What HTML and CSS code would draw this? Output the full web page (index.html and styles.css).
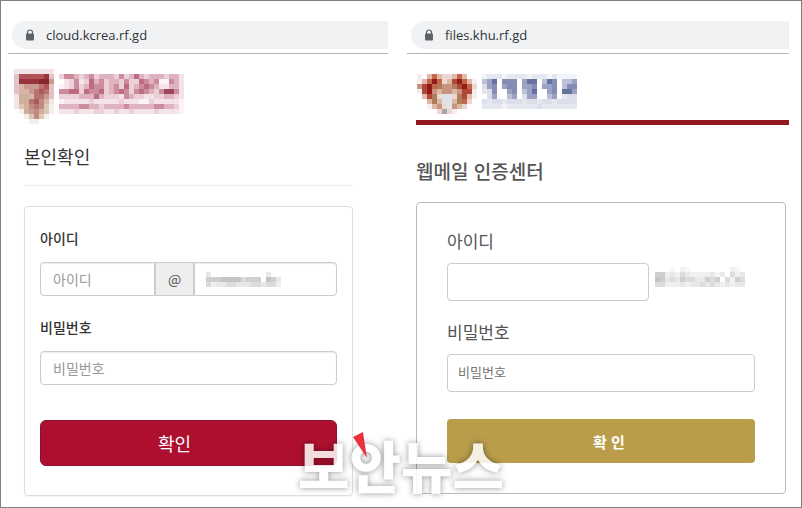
FILE: index.html
```html
<!DOCTYPE html>
<html lang="ko">
<head>
    <meta charset="UTF-8">
    <meta name="viewport" content="width=device-width, initial-scale=1.0">
    <title>보안뉴스</title>
    <link rel="stylesheet" href="styles.css">
</head>
<body>
    <main class="frame">
        <section class="panel cloud">
            <div class="address-bar">
                <div class="address">
                    <svg class="lock" viewBox="0 0 10 12" width="10" height="12">
                        <path d="M2.500 5V3.500a2.500 2.500 0 0 1 5 0V5" fill="none" stroke="#5f6368" stroke-width="1.200"/>
                        <rect x="1" y="4.500" width="8" height="7" rx="1" fill="#5f6368"/>
                    </svg>
                    <span>cloud.kcrea.rf.gd</span>
                </div>
            </div>
            <div class="logo"><svg class="mosaic" data-map="cloudLogo"></svg></div>
            <div class="content">
                <h1>본인확인</h1>
                <form class="box">
                    <label for="cloud-id">아이디</label>
                    <div class="input-group">
                        <input type="text" id="cloud-id" class="user" placeholder="아이디">
                        <span class="addon">@</span>
                        <div class="domain">
                            <input type="text" aria-label="도메인">
                            <svg class="mosaic" data-map="cloudDomain"></svg>
                        </div>
                    </div>
                    <label for="cloud-pw">비밀번호</label>
                    <input type="password" id="cloud-pw" placeholder="비밀번호">
                    <button type="button">확인</button>
                </form>
            </div>
        </section>

        <section class="panel files">
            <div class="address-bar">
                <div class="address">
                    <svg class="lock" viewBox="0 0 10 12" width="10" height="12">
                        <path d="M2.500 5V3.500a2.500 2.500 0 0 1 5 0V5" fill="none" stroke="#5f6368" stroke-width="1.200"/>
                        <rect x="1" y="4.500" width="8" height="7" rx="1" fill="#5f6368"/>
                    </svg>
                    <span>files.khu.rf.gd</span>
                </div>
            </div>
            <div class="logo"><svg class="mosaic" data-map="filesLogo"></svg></div>
            <div class="content">
                <h1>웹메일 인증센터</h1>
                <form class="box">
                    <label for="files-id">아이디</label>
                    <div class="id-row">
                        <input type="text" id="files-id">
                        <svg class="mosaic" data-map="filesDomain"></svg>
                    </div>
                    <label for="files-pw">비밀번호</label>
                    <input type="password" id="files-pw" placeholder="비밀번호">
                    <button type="button">확 인</button>
                </form>
            </div>
        </section>

        <div class="watermark">
            <span class="name">보안뉴스</span>
            <svg class="needle" viewBox="0 0 16 26" width="16" height="26">
                <path d="M1 5L11 0L15 26Z" fill="#e8323c"/>
            </svg>
        </div>
    </main>
    <script src="script.js"></script>
</body>
</html>
```

FILE: styles.css
```css
* {
    box-sizing: border-box;
}
body {
    margin: 0;
    background-color: #fff;
    color: #333;
    font-family: "Noto Sans CJK KR", sans-serif;
    font-size: 14px;
    line-height: 20px;
}
.frame {
    position: relative;
    display: grid;
    grid-template-columns: 380fr 382fr;
    gap: 19px;
    min-height: 100vh;
    padding: 20px 12px 11px 7px;
    border: 1px solid #808080;
}
.address-bar {
    padding: 0 0 4px 4px;
    border-bottom: 1px solid #b4b4b4;
}
.address {
    display: flex;
    align-items: center;
    gap: 11px;
    height: 28px;
    padding-left: 13px;
    border-radius: 14px 0 0 14px;
    background-color: #f0f2f4;
    color: #303438;
    font-family: "Open Sans", sans-serif;
    font-size: 13px;
}
.mosaic {
    display: block;
    flex: none;
}
h1 {
    margin: 0;
    font-weight: 400;
}
label {
    display: block;
}
input {
    display: block;
    width: 100%;
    min-width: 0;
    border: 1px solid #ccc;
    border-radius: 4px;
    background-color: #fff;
    font-family: inherit;
    color: #555;
}
button {
    display: block;
    width: 100%;
    color: #fff;
    font-family: inherit;
}

/* left page */
.cloud .logo {
    padding: 15px 0 0 6px;
}
.cloud .content {
    padding: 20px 35px 0 16px;
}
.cloud h1 {
    padding-bottom: 17px;
    border-bottom: 1px solid #eee;
    font-size: 18px;
    line-height: 24px;
}
.cloud .box {
    margin-top: 20px;
    padding: 21px 15px 29px;
    border: 1px solid #ddd;
    border-radius: 4px;
    box-shadow: 0 1px 1px rgba(0, 0, 0, 0.05);
}
.cloud label {
    margin-bottom: 14px;
    font-weight: 500;
}
.cloud input {
    height: 34px;
    padding: 0 12px;
    font-size: 14px;
    box-shadow: inset 0 1px 1px rgba(0, 0, 0, 0.08);
}
.cloud input::placeholder {
    color: #999;
}
.input-group {
    display: grid;
    grid-template-columns: 115fr 39px 143fr;
    margin-bottom: 21px;
}
.input-group .user {
    border-radius: 4px 0 0 4px;
}
.addon {
    border: 1px solid #ccc;
    background-color: #eee;
    color: #555;
    line-height: 32px;
    text-align: center;
}
.domain {
    position: relative;
}
.domain input {
    border-radius: 0 4px 4px 0;
}
.domain .mosaic {
    position: absolute;
    top: 10px;
    left: 12px;
}
.cloud button {
    height: 46px;
    margin-top: 35px;
    padding: 0 28px 0 0;
    border: 1px solid #8a1030;
    border-radius: 6px;
    background-color: #ae0f2f;
    font-size: 18px;
}

/* right page */
.files {
    color: #555;
}
.files .logo {
    margin-left: 9px;
    padding: 20px 0 6px 1px;
    border-bottom: 5px solid #921820;
}
.files .content {
    padding: 33px 3px 0 9px;
}
.files h1 {
    font-size: 19px;
    font-weight: 500;
    line-height: 26px;
}
.files .box {
    margin-top: 18px;
    padding: 28px 30px 30px;
    border: 1px solid #bbb;
    border-radius: 4px;
}
.files label {
    margin-bottom: 12px;
    font-size: 17px;
}
.files input {
    height: 38px;
    padding: 0 10px 4px;
    font-size: 13px;
}
.files input::placeholder {
    color: #757575;
}
.id-row {
    display: flex;
    align-items: center;
    gap: 6px;
    margin-bottom: 21px;
}
.id-row .mosaic {
    margin: 0 10px 10px 0;
}
.files button {
    height: 44px;
    margin-top: 27px;
    padding: 0 0 0 16px;
    border: 0;
    border-radius: 4px;
    background-color: #b99d4b;
    font-size: 15px;
    font-weight: 700;
}

.watermark {
    position: absolute;
    bottom: 3px;
    left: 50%;
    transform: translateX(-50%);
    color: #fff;
    font-size: 56px;
    font-weight: 900;
    line-height: 80px;
    white-space: nowrap;
    pointer-events: none;
}
.watermark .name {
    display: block;
    filter: drop-shadow(0 0 3px rgba(0, 0, 0, 0.5)) opacity(0.85);
}
.needle {
    position: absolute;
    top: 8px;
    left: 54px;
}
```

FILE: script.js
```javascript
const CELL = 5;

// number keys run from light to dark, letter keys are single colours
const palettes = {
    pink: ['#fff', '#fbf3f5', '#f4e3e8', '#ecd0d8', '#dfb2bf', '#cc8c9e', '#bc6c82', '#a04458'],
    shield: {
        a: '#f5e4e6', b: '#e2c2c4', c: '#b05358', d: '#98343a', e: '#87262c',
        f: '#d8b5a8', g: '#ca9a92', h: '#b87272', i: '#a85a5a', j: '#cfb09a',
        k: '#dcc8b8', l: '#f6eeea', m: '#c08c80'
    },
    emblem: {
        a: '#f8eeee', b: '#e4b8a8', c: '#c4664c', d: '#b04838', e: '#951c16',
        f: '#c89480', g: '#dcb8a4', h: '#e6dcd6', i: '#e0e2e8', j: '#b07c60',
        k: '#ecd6d2', l: '#a8a4a4'
    },
    blue: ['#fff', '#f3f4f9', '#e6e8f1', '#dcdfea', '#bcc1d8', '#9aa1c2', '#858db4', '#66719f'],
    grey: ['#fff', '#f7f7f8', '#f0f0f1', '#e8e8e9', '#dcdcdd', '#cfcfd0', '#c4c4c4', '#aaa']
};

const maps = {
    cloudLogo: [
        { x: 0, y: 0, colors: palettes.shield, rows: [
            'aaaaaaaa',
            'bcccccdb',
            'bddddeeg',
            'bfggghcb',
            'bffghihb',
            'ajjfhhgb',
            'ajjhimfa',
            'akjmhmkl',
            '.ljgmjkl',
            '..lkmkl.',
            '...ll...'
        ] },
        { x: 9, y: 1, colors: palettes.pink, rows: [
            '3554345344435346434443442',
            '0235236453443533654511542',
            '1235346553453634565422442',
            '5566365563456535654357752',
            '3333444643332543322334432',
            '1222223222223222113222221',
            '4444554434444544444554431',
            '2223222332232232222322221'
        ] }
    ],
    filesLogo: [
        { x: 0, y: 0, colors: palettes.emblem, rows: [
            'a.bcbkkbcb..',
            'abceckgdecba',
            'fdecjffjdeck',
            'adefgffgfdda',
            '.bdjkiikjdba',
            '..gjgiigjck.',
            '..agfhifgk..',
            '....klka....'
        ] },
        { x: 13, y: 0, colors: palettes.blue, rows: [
            '1222122221222121111',
            '4570666057704760445',
            '3560566055605560466',
            '2360056045700560775',
            '0350045035500450233',
            '3233233323323323333',
            '2222122222232222222'
        ] }
    ],
    cloudDomain: [
        { x: 0, y: 0, colors: palettes.grey, rows: [
            '300000000000300',
            '555666645550653',
            '423344333443442'
        ] }
    ],
    filesDomain: [
        { x: 0, y: 0, colors: palettes.grey, rows: [
            '000102100000000210',
            '552324322223130423',
            '653435443354504254',
            '442223233434323233'
        ] }
    ]
};

function drawMosaic(svg) {
    let width = 0;
    let height = 0;
    let cells = '';

    maps[svg.dataset.map].forEach(part => {
        part.rows.forEach((row, r) => {
            [...row].forEach((key, c) => {
                const x = (part.x + c) * CELL;
                const y = (part.y + r) * CELL;
                width = Math.max(width, x + CELL);
                height = Math.max(height, y + CELL);
                if (part.colors[key]) {
                    cells += `<rect x="${x}" y="${y}" width="${CELL}" height="${CELL}" fill="${part.colors[key]}"/>`;
                }
            });
        });
    });

    svg.setAttribute('width', width);
    svg.setAttribute('height', height);
    svg.innerHTML = cells;
}

document.querySelectorAll('.mosaic').forEach(drawMosaic);
```
